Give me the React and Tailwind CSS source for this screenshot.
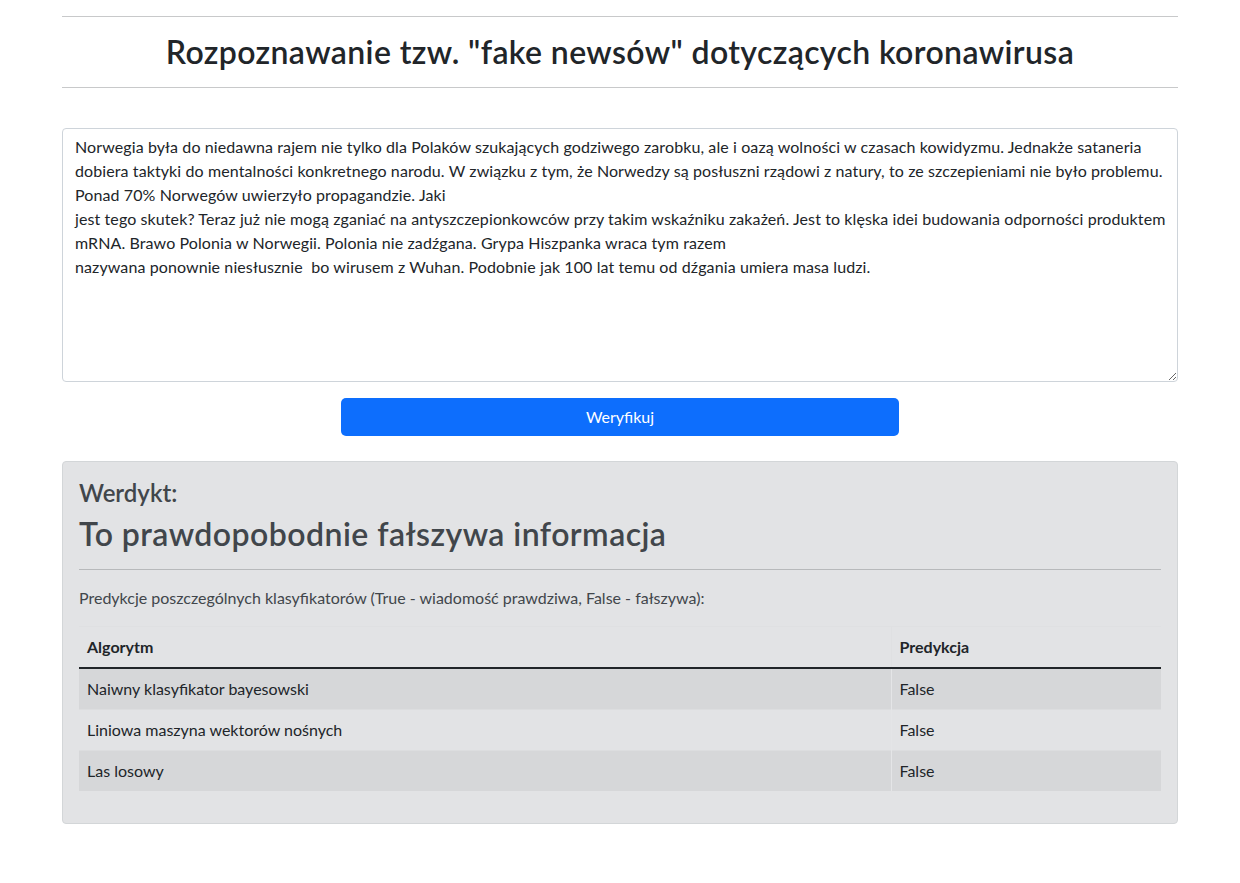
import React from "react";

const FONT = { fontFamily: '"Segoe UI", Lato, "Open Sans", "Liberation Sans", sans-serif' };

const NEWS = [
	"Norwegia była do niedawna rajem nie tylko dla Polaków szukających godziwego zarobku, ale i oazą wolności w czasach kowidyzmu. Jednakże sataneria",
	"dobiera taktyki do mentalności konkretnego narodu. W związku z tym, że Norwedzy są posłuszni rządowi z natury, to ze szczepieniami nie było problemu.",
	"Ponad 70% Norwegów uwierzyło propagandzie. Jaki",
	"jest tego skutek? Teraz już nie mogą zganiać na antyszczepionkowców przy takim wskaźniku zakażeń. Jest to klęska idei budowania odporności produktem",
	"mRNA. Brawo Polonia w Norwegii. Polonia nie zadźgana. Grypa Hiszpanka wraca tym razem",
	"nazywana ponownie niesłusznie  bo wirusem z Wuhan. Podobnie jak 100 lat temu od dźgania umiera masa ludzi.",
].join("\n");

const ROWS = [
	{ name: "Naiwny klasyfikator bayesowski", pred: "False" },
	{ name: "Liniowa maszyna wektorów nośnych", pred: "False" },
	{ name: "Las losowy", pred: "False" },
];

export default function App() {
	const [text, setText] = React.useState(NEWS);

	return (
		<div className="min-h-screen bg-white text-[#212529]" style={FONT}>
			<div className="w-[1116px] mx-auto">
				<hr className="mt-4 mb-0 border-0 border-t border-[#c8c9ca]" />
				<h2 className="mt-4 mb-4 text-[32px] leading-[38px] font-semibold tracking-[0.38px] text-center">
					Rozpoznawanie tzw. "fake newsów" dotyczących koronawirusa
				</h2>
				<hr className="border-0 border-t border-[#c8c9ca]" />

				<textarea
					value={text}
					onChange={(e) => setText(e.target.value)}
					rows={10}
					wrap="off"
					className="mt-10 block w-full h-[254px] px-3 py-1.5 text-base leading-6 tracking-[0.1px] text-[#212529] border border-[#ced4da] rounded-[4px] overflow-hidden whitespace-pre outline-none"
					style={FONT}
				/>

				<div className="mt-4 flex justify-center">
					<button className="w-[558px] h-[38px] rounded-[5px] bg-[#0d6efd] text-white text-base">
						Weryfikuj
					</button>
				</div>

				<div className="mt-[25px] bg-[#e2e3e5] border border-[#d3d6d8] rounded-[4px] p-4 text-[#41464b]">
					<h4 className="text-2xl leading-[29px] font-semibold mb-2">Werdykt:</h4>
					<h2 className="text-[32px] leading-[38px] font-semibold tracking-[0.45px]">
						To prawdopobodnie fałszywa informacja
					</h2>
					<hr className="my-4 border-0 border-t border-[#b7b9bb]" />
					<p className="text-base leading-6 mb-4">
						Predykcje poszczególnych klasyfikatorów (True - wiadomość prawdziwa, False - fałszywa):
					</p>
					<table className="w-full mb-4 border-collapse text-base leading-6 text-[#212529]">
						<thead>
							<tr className="border-t border-[#dfe0e2]">
								<th className="w-[812px] text-left font-bold px-2 py-2 border-b-2 border-b-[#212529] border-r border-r-[#dfe0e2]">
									Algorytm
								</th>
								<th className="text-left font-bold px-2 py-2 border-b-2 border-b-[#212529]">
									Predykcja
								</th>
							</tr>
						</thead>
						<tbody>
							{ROWS.map((r, i) => (
								<tr
									key={r.name}
									className={`${i % 2 === 0 ? "bg-[#d6d7d9]" : "bg-[#e2e3e5]"} ${
										i < ROWS.length - 1 ? "border-b border-[#dcdddf]" : ""
									}`}
								>
									<td className="px-2 py-2 border-r border-[#e4e5e7]">{r.name}</td>
									<td className="px-2 py-2">{r.pred}</td>
								</tr>
							))}
						</tbody>
					</table>
				</div>
			</div>
		</div>
	);
}
